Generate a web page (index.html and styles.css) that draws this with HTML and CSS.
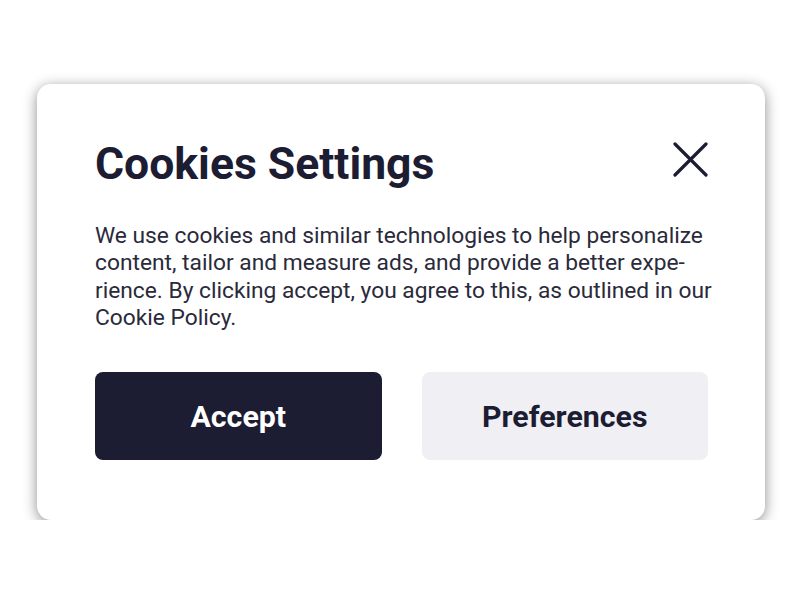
FILE: index.html
```html
<!DOCTYPE html>
<html lang="en">
<head>
<meta charset="utf-8">
<title>Cookies Settings</title>
<link rel="stylesheet" href="styles.css">
</head>
<body>
<div class="page">
  <div class="card">
    <div class="header">
      <h1 class="title">Cookies Settings</h1>
      <button class="close" aria-label="Close">
        <svg width="35" height="35" viewBox="0 0 35 35"><path d="M2 2L33 33M33 2L2 33" stroke="#1c1c33" stroke-width="3.2" stroke-linecap="round" fill="none"/></svg>
      </button>
    </div>
    <p class="text">We use cookies and similar technologies to help personalize content, tailor and measure ads, and provide a better expe&shy;rience. By clicking accept, you agree to this, as outlined in our Cookie Policy.</p>
    <div class="actions">
      <button class="btn btn-primary">Accept</button>
      <button class="btn btn-secondary">Preferences</button>
    </div>
  </div>
</div>
</body>
</html>
```
FILE: styles.css
```css
html, body {
  margin: 0;
  padding: 0;
  background: #ffffff;
}
body {
  font-family: Roboto, "Liberation Sans", sans-serif;
  color: #1c1c33;
}
.page {
  padding: 84px 0 0 37px;
}
.card {
  box-sizing: border-box;
  width: 728px;
  height: 436px;
  background: #ffffff;
  border-radius: 14px;
  box-shadow: 0 3px 14px rgba(0, 0, 0, 0.45);
  padding: 52px 57px 60px 58px;
  display: flex;
  flex-direction: column;
}
.header {
  display: flex;
  justify-content: space-between;
  align-items: flex-start;
}
.title {
  margin: 0;
  font-size: 44.5px;
  font-weight: 700;
  line-height: 56px;
  color: #1c1c33;
}
.close {
  border: 0;
  background: none;
  padding: 0;
  margin: 6px 0 0 0;
  width: 35px;
  height: 35px;
  cursor: pointer;
}
.close svg { display: block; }
.text {
  margin: 30px -10px 0 0;
  font-size: 22.75px;
  line-height: 27.3px;
  color: #2a2a3a;
  hyphens: manual;
}
.actions {
  margin-top: auto;
  display: flex;
  gap: 40px;
}
.btn {
  flex: 1;
  height: 88px;
  border: 0;
  border-radius: 8px;
  font-family: Roboto, "Liberation Sans", sans-serif;
  font-size: 30.3px;
  font-weight: 700;
  cursor: pointer;
}
.btn-primary {
  background: #1c1c33;
  color: #ffffff;
}
.btn-secondary {
  background: #f0f0f4;
  color: #1c1c33;
}
```
